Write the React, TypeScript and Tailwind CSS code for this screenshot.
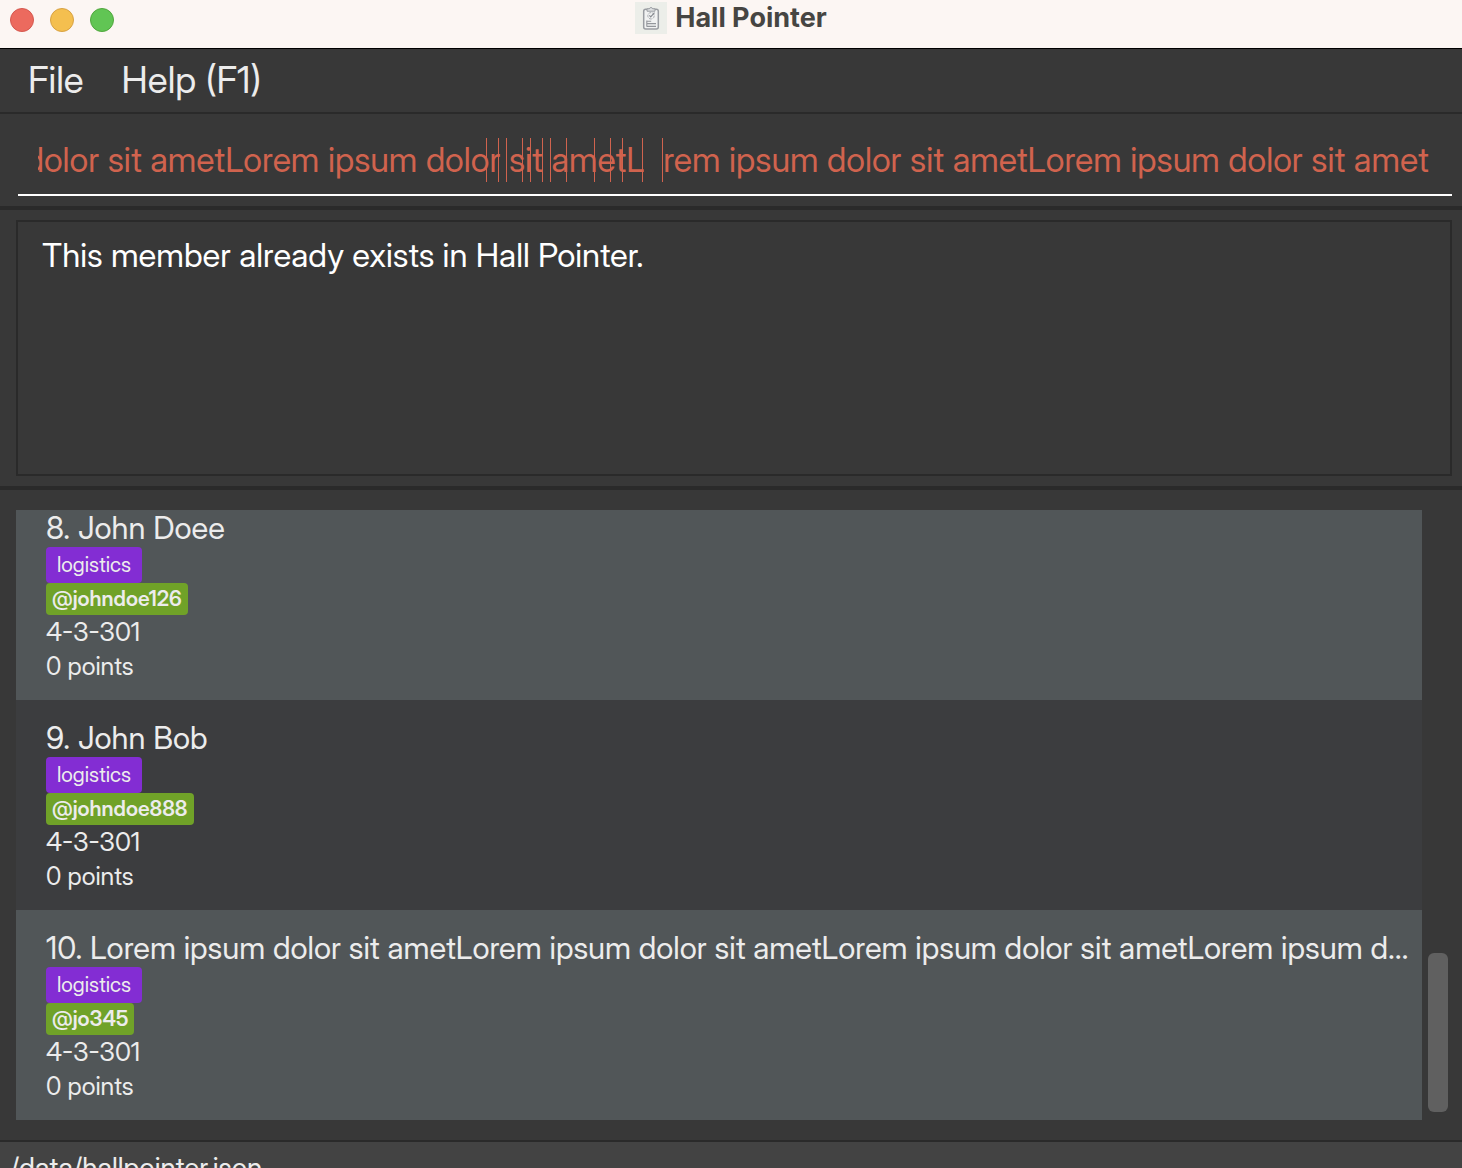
import { useLayoutEffect, useRef } from "react";

const LOREM = "Lorem ipsum dolor sit amet";

const members = [
  { index: 8, name: "John Doee", tag: "logistics", handle: "johndoe126", room: "4-3-301", points: 0 },
  { index: 9, name: "John Bob", tag: "logistics", handle: "johndoe888", room: "4-3-301", points: 0 },
  { index: 10, name: LOREM.repeat(6), tag: "logistics", handle: "jo345", room: "4-3-301", points: 0 },
];

/* Distances of the stray caret marks from the right edge of the command box. */
const caretMarks = [965, 953, 945, 929, 921, 909, 901, 885, 857, 841, 829, 809, 789];

function ClipboardIcon() {
  return (
    <svg viewBox="0 0 32 32" className="size-8" fill="none" aria-hidden="true">
      <rect width="32" height="32" fill="#eceee9" />
      <rect x="8.7" y="7.2" width="14.6" height="19.8" rx="2" fill="#f1f2f2" stroke="#9a9da2" strokeWidth="1.5" />
      <path d="M12 9.2V6.8h2.3a1.8 1.8 0 0 1 3.4 0H20v2.4z" fill="#dfe1e2" stroke="#9a9da2" strokeWidth="1" />
      <circle cx="16" cy="13.8" r="3.2" stroke="#a9acb1" strokeWidth="1" strokeDasharray="3 1" />
      <path d="m14.4 13.4 1.3 1.5 3.8-4.2" stroke="#85898f" strokeWidth="1.1" />
      <path d="M11.8 18.4v6.4M11.8 19.2h4.4M12 21.6h9M12 24.4h9" stroke="#94979c" strokeWidth="1.1" />
    </svg>
  );
}

function TitleBar() {
  return (
    <header className="flex h-[49px] shrink-0 items-start border-b border-black bg-[#fcf6f3] px-2.5 text-[#464542]">
      <div className="flex flex-1 gap-4 pt-2">
        <button aria-label="Close" className="size-6 rounded-full border border-[#d5584f] bg-[#ec6a5e]" />
        <button aria-label="Minimize" className="size-6 rounded-full border border-[#d8a243] bg-[#f4bf4f]" />
        <button aria-label="Zoom" className="size-6 rounded-full border border-[#51a73e] bg-[#61c554]" />
      </div>
      <div className="flex items-center gap-2 pt-0.5">
        <ClipboardIcon />
        <h1 className="font-['Inter',sans-serif] text-[27px] leading-8 font-bold">Hall Pointer</h1>
      </div>
      <div className="flex-1" />
    </header>
  );
}

function CommandBox() {
  const input = useRef<HTMLInputElement>(null);
  useLayoutEffect(() => {
    const box = input.current;
    if (box) box.scrollLeft = box.scrollWidth;
  }, []);
  return (
    <div className="shrink-0 border-b-4 border-[#2a2a2a] pt-4 pr-2.5 pb-2.5 pl-[18px]">
      <div className="relative border-b-2 border-white pr-[23px] pl-5">
        <input
          ref={input}
          aria-label="Command"
          defaultValue={"add n/" + LOREM.repeat(8)}
          className="block h-16 w-full bg-transparent pb-1.5 text-[34px] text-[#d0634e] outline-none"
        />
        <span className="absolute top-2 right-[789px] h-11 w-[19px] bg-[#383838]" />
        {caretMarks.map((right) => (
          <span key={right} className="absolute top-2 h-11 w-px bg-[#d0634e]" style={{ right }} />
        ))}
      </div>
    </div>
  );
}

function MemberCard({ member }: { member: (typeof members)[number] }) {
  return (
    <li className="flex h-[210px] shrink-0 flex-col items-start bg-[#515658] pt-[18px] pr-2 pl-[30px] even:bg-[#3c3d3f]">
      <h2 className="w-full truncate text-[31px] leading-10">
        {member.index}. {member.name}
      </h2>
      <span className="-mt-px h-9 rounded bg-[#832dd3] px-[11px] text-[21px] leading-9">{member.tag}</span>
      <span className="h-8 rounded bg-[#70a228] px-1.5 text-[21px] leading-8 font-semibold">
        <span className="font-medium">@</span>
        {member.handle}
      </span>
      <p className="text-[26px] leading-[34px]">{member.room}</p>
      <p className="text-[25px] leading-[34px]">{member.points} points</p>
    </li>
  );
}

export default function App() {
  return (
    <div className="flex h-screen flex-col overflow-hidden bg-[#383838] font-['Inter_Display','Inter',sans-serif] text-[#ececec]">
      <TitleBar />
      <nav className="flex h-[65px] shrink-0 items-center gap-[38px] border-b-2 border-[#2a2a2a] px-7 pb-0.5 text-[37px]">
        <button>File</button>
        <button>Help (F1)</button>
      </nav>
      <CommandBox />
      <section className="shrink-0 border-b-4 border-[#2a2a2a] py-2.5 pr-2.5 pl-4">
        <textarea
          readOnly
          aria-label="Result"
          value="This member already exists in Hall Pointer."
          className="block h-64 w-full resize-none border-2 border-[#2a2a2a] bg-transparent px-6 py-3 text-[33px] leading-[42px] text-white outline-none"
        />
      </section>
      <main className="flex min-h-0 flex-1 gap-1.5 py-5 pr-3.5 pl-4">
        <ul className="flex min-w-0 flex-1 flex-col justify-end overflow-hidden">
          {members.map((member) => (
            <MemberCard key={member.index} member={member} />
          ))}
        </ul>
        <div className="flex w-5 flex-col justify-end pb-2">
          <div className="h-[159px] rounded-md bg-[#606060]" />
        </div>
      </main>
      <footer className="h-7 shrink-0 border-t-2 border-[#2a2a2a] bg-[#434343] px-2.5 pt-2.5 text-[28px] leading-8">
        /data/hallpointer.json
      </footer>
    </div>
  );
}
